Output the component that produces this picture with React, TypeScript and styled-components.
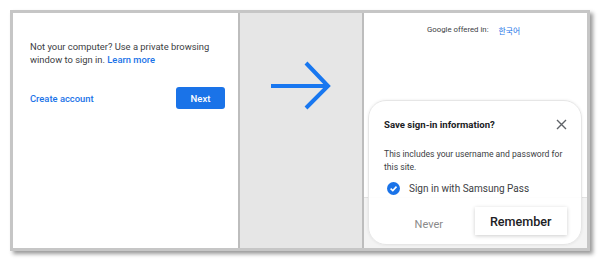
import React from "react";
import styled, { createGlobalStyle } from "styled-components";

const GlobalStyle = createGlobalStyle`
  body {
    margin: 0;
    background: #ffffff;
    font-family: Roboto, "Noto Sans", Arial, sans-serif;
  }
`;

const Page = styled.div`
  width: 600px;
  height: 264px;
  padding: 10px 0 0 10px;
  box-sizing: border-box;
`;

const Frame = styled.div`
  display: flex;
  width: 580px;
  height: 241px;
  box-sizing: border-box;
  border: 3px solid #c6c6c6;
  box-shadow: 3px 3px 4px rgba(0, 0, 0, 0.4);
  background: #ffffff;
`;

const Panel = styled.div<{ $width: number; $tone?: string }>`
  width: ${(p) => p.$width}px;
  flex-shrink: 0;
  background: ${(p) => p.$tone ?? "#ffffff"};
  position: relative;
  overflow: hidden;
`;

const Divider = styled.div`
  width: 2px;
  flex-shrink: 0;
  background: #bdbdbd;
`;

const SignInBody = styled.div`
  display: flex;
  flex-direction: column;
  padding: 28px 12px 0 17px;
`;

const Notice = styled.p`
  margin: 0;
  font-size: 9.4px;
  line-height: 12.5px;
  color: #3c4043;
`;

const BlueLink = styled.span`
  color: #1a73e8;
  font-weight: 500;
`;

const ActionRow = styled.div`
  display: flex;
  align-items: center;
  justify-content: space-between;
  margin-top: 21px;
`;

const CreateLink = styled.span`
  font-size: 9.4px;
  font-weight: 500;
  color: #1a73e8;
`;

const NextButton = styled.div`
  width: 49px;
  height: 22px;
  margin-right: 1px;
  border-radius: 3px;
  background: #1a73e8;
  color: #ffffff;
  font-size: 9.5px;
  font-weight: 500;
  display: flex;
  align-items: center;
  justify-content: center;
`;

const ArrowBox = styled.div`
  display: flex;
  justify-content: center;
  padding-top: 48px;
  padding-left: 1px;
`;

const LangLine = styled.div`
  display: flex;
  justify-content: center;
  gap: 10px;
  padding-top: 12px;
  padding-right: 4px;
  font-size: 7.8px;
  color: #3c4043;
`;

const LangLink = styled.span`
  color: #1a73e8;
  font-family: Roboto, "Noto Sans CJK KR", sans-serif;
`;

const LowerShade = styled.div`
  position: absolute;
  left: 0;
  right: 0;
  top: 184px;
  bottom: 0;
  background: #f3f3f3;
  border-top: 1px solid #e2e2e2;
`;

const Sheet = styled.div`
  position: absolute;
  left: 4px;
  top: 87px;
  width: 214px;
  height: 145px;
  box-sizing: border-box;
  border-radius: 18px;
  background: rgba(255, 255, 255, 0.93);
  border: 1px solid #e6e6e6;
  box-shadow: 0 0 3px rgba(0, 0, 0, 0.08);
  padding: 18px 14px 0 15px;
  display: flex;
  flex-direction: column;
`;

const SheetHead = styled.div`
  display: flex;
  align-items: center;
  justify-content: space-between;
`;

const SheetTitle = styled.div`
  font-size: 9.6px;
  font-weight: 700;
  color: #202124;
`;

const SheetText = styled.p`
  margin: 18px 0 0;
  font-size: 8.6px;
  line-height: 13px;
  color: #3c4043;
`;

const CheckRow = styled.div`
  display: flex;
  align-items: center;
  gap: 9px;
  margin-top: 8px;
  padding-left: 3px;
  font-size: 10px;
  color: #3c4043;
`;

const ButtonRow = styled.div`
  display: flex;
  align-items: center;
  margin-top: 12px;
  margin-left: -1px;
`;

const NeverButton = styled.div`
  width: 92px;
  text-align: center;
  padding-top: 7px;
  font-size: 11px;
  color: #8a8a8a;
`;

const RememberButton = styled.div`
  width: 93px;
  height: 28px;
  display: flex;
  align-items: center;
  justify-content: center;
  background: #ffffff;
  box-shadow: 0 1px 4px rgba(0, 0, 0, 0.2);
  font-size: 12.6px;
  font-weight: 500;
  color: #202124;
`;

const Arrow = () => (
  <svg width="64" height="50" viewBox="0 0 64 50">
    <g stroke="#1877f0" strokeWidth="4" fill="none" strokeLinecap="butt">
      <line x1="1" y1="25" x2="58" y2="25" />
      <polyline points="36,2 58,25 36,47" strokeLinejoin="miter" />
    </g>
  </svg>
);

const CloseIcon = () => (
  <svg width="11" height="11" viewBox="0 0 11 11">
    <path d="M1 1 L10 10 M10 1 L1 10" stroke="#5f6368" strokeWidth="1.4" />
  </svg>
);

const CheckIcon = () => (
  <svg width="13" height="13" viewBox="0 0 13 13">
    <circle cx="6.5" cy="6.5" r="6.5" fill="#1a73e8" />
    <path d="M3.6 6.6 L5.8 8.6 L9.5 4.6" stroke="#ffffff" strokeWidth="1.6" fill="none" />
  </svg>
);

export default function App() {
  return (
    <Page>
      <GlobalStyle />
      <Frame>
        <Panel $width={225}>
          <SignInBody>
            <Notice>
              Not your computer? Use a private browsing
              <br />
              window to sign in. <BlueLink>Learn more</BlueLink>
            </Notice>
            <ActionRow>
              <CreateLink>Create account</CreateLink>
              <NextButton>Next</NextButton>
            </ActionRow>
          </SignInBody>
        </Panel>
        <Divider />
        <Panel $width={122} $tone="#e6e6e6">
          <ArrowBox>
            <Arrow />
          </ArrowBox>
        </Panel>
        <Divider />
        <Panel $width={223}>
          <LangLine>
            <span>Google offered in:</span>
            <LangLink>한국어</LangLink>
          </LangLine>
          <LowerShade />
          <Sheet>
            <SheetHead>
              <SheetTitle>Save sign-in information?</SheetTitle>
              <CloseIcon />
            </SheetHead>
            <SheetText>
              This includes your username and password for
              <br />
              this site.
            </SheetText>
            <CheckRow>
              <CheckIcon />
              <span>Sign in with Samsung Pass</span>
            </CheckRow>
            <ButtonRow>
              <NeverButton>Never</NeverButton>
              <RememberButton>Remember</RememberButton>
            </ButtonRow>
          </Sheet>
        </Panel>
      </Frame>
    </Page>
  );
}
